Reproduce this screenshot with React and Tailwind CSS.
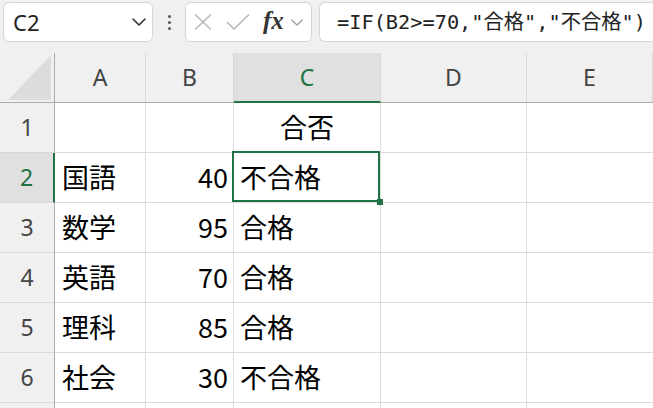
import React from 'react';

const COLS = ['A', 'B', 'C', 'D', 'E'];
const ROWS = [
  { n: 1, a: '', b: '', c: '合否', center: true },
  { n: 2, a: '国語', b: '40', c: '不合格' },
  { n: 3, a: '数学', b: '95', c: '合格' },
  { n: 4, a: '英語', b: '70', c: '合格' },
  { n: 5, a: '理科', b: '85', c: '合格' },
  { n: 6, a: '社会', b: '30', c: '不合格' },
  { n: 7, a: '', b: '', c: '', hideLabel: true },
];

const GRID = 'grid grid-cols-[55px_91px_88px_147px_146px_1fr]';
const cellFont = { fontFamily: '"Noto Sans CJK JP", "Noto Sans", sans-serif' };
const headFont = { fontFamily: '"Noto Sans", "Open Sans", sans-serif' };

const Chevron = ({ className, color = '#333' }) => (
  <svg viewBox="0 0 14 8" className={className} fill="none">
    <path d="M1 1l6 6 6-6" stroke={color} strokeWidth="1.6" strokeLinecap="round" strokeLinejoin="round" />
  </svg>
);

const Toolbar = () => (
  <div className="flex items-start h-[53px] bg-[#f0f0f0] pt-[2px]">
    {/* Name box */}
    <div className="ml-[3px] w-[150px] h-[40px] bg-white border border-[#d6d6d6] rounded-[6px] flex items-center pl-[9px] pr-[6px]">
      <span className="text-[22px] text-[#222] flex-1 leading-none" style={headFont}>C2</span>
      <Chevron className="w-[14px] h-[8px]" />
    </div>
    {/* Dots */}
    <div className="w-[32px] h-[40px] flex flex-col items-center justify-center gap-[3px]">
      <span className="w-[3px] h-[3px] rounded-full bg-[#555]" />
      <span className="w-[3px] h-[3px] rounded-full bg-[#555]" />
      <span className="w-[3px] h-[3px] rounded-full bg-[#555]" />
    </div>
    {/* fx box */}
    <div className="w-[127px] h-[40px] bg-white border border-[#d6d6d6] rounded-[6px] flex items-center pl-[7px]">
      <svg viewBox="0 0 20 16" className="w-[20px] h-[16px]" fill="none">
        <path d="M2 0.5l16 15M18 0.5l-16 15" stroke="#b8b8b8" strokeWidth="1.5" />
      </svg>
      <svg viewBox="0 0 24 16" className="w-[24px] h-[16px] ml-[13px]" fill="none">
        <path d="M1 8l7 7L23 0.5" stroke="#b8b8b8" strokeWidth="1.5" />
      </svg>
      <span
        className="ml-[13px] text-[25px] italic font-bold text-[#333] leading-none -mt-[3px]"
        style={{ fontFamily: '"Liberation Serif", "DejaVu Serif", serif' }}
      >
        fx
      </span>
      <Chevron className="w-[12px] h-[7px] ml-[7px]" color="#a0a0a0" />
    </div>
    {/* Formula */}
    <div className="ml-[7px] flex-1 h-[40px] bg-white border border-r-0 border-[#d6d6d6] rounded-l-[6px] flex items-center pl-[17px] whitespace-nowrap overflow-hidden">
      <span
        className="text-[20.3px] text-[#222]"
        style={{ fontFamily: '"DejaVu Sans Mono", "Liberation Mono", "Noto Sans CJK JP", monospace' }}
      >
        =IF(B2&gt;=70,"合格","不合格")
      </span>
    </div>
  </div>
);

const ColumnHeader = () => (
  <div className={`${GRID} h-[50px] bg-[#f0f0f0] border-b border-[#ababab]`}>
    <div className="border-r border-[#ababab] flex items-end justify-end pr-[3px] pb-[2px]">
      <svg viewBox="0 0 43 45" className="w-[43px] h-[45px]">
        <path d="M43 0V45H0Z" fill="#dcdcdc" />
      </svg>
    </div>
    {COLS.map((c) => (
      <div
        key={c}
        className={`flex items-center justify-center text-[23px] border-r border-[#d9d9d9] ${
          c === 'C' ? 'bg-[#e0e0e0] text-[#217346] border-b-2 border-b-[#217346] -mb-[1px]' : 'text-[#444]'
        }`}
        style={headFont}
      >
        {c}
      </div>
    ))}
  </div>
);

const Row = ({ row }) => {
  const active = row.n === 2;
  return (
    <div className={`${GRID} h-[50px]`} style={cellFont}>
      <div
        className={`flex items-center justify-center text-[23px] border-b border-[#d9d9d9] ${
          active
            ? 'bg-[#e0e0e0] text-[#217346] border-r-2 border-r-[#217346]'
            : 'bg-[#f0f0f0] text-[#444] border-r border-r-[#ababab]'
        }`}
        style={headFont}
      >
        {row.hideLabel ? '' : row.n}
      </div>
      <div className="flex items-center pl-[7px] text-[27px] text-black border-r border-b border-[#dcdcdc]">{row.a}</div>
      <div className="flex items-center justify-end pr-[5px] text-[27px] text-black border-r border-b border-[#dcdcdc]">{row.b}</div>
      <div
        className={`relative flex items-center text-[27px] text-black border-r border-b border-[#dcdcdc] ${
          row.center ? 'justify-center' : 'pl-[6px]'
        }`}
      >
        {row.c}
        {active && (
          <>
            <div className="absolute -left-[2px] -top-[2px] right-0 bottom-0 border-2 border-[#217346]" />
            <div className="absolute -right-[3px] -bottom-[3px] w-[6px] h-[6px] bg-[#217346] z-10" />
          </>
        )}
      </div>
      <div className="border-r border-b border-[#dcdcdc]" />
      <div className="border-b border-[#dcdcdc]" />
    </div>
  );
};

export default function App() {
  return (
    <div className="w-[653px] h-[408px] overflow-hidden bg-white">
      <Toolbar />
      <ColumnHeader />
      {ROWS.map((r) => (
        <Row key={r.n} row={r} />
      ))}
    </div>
  );
}
